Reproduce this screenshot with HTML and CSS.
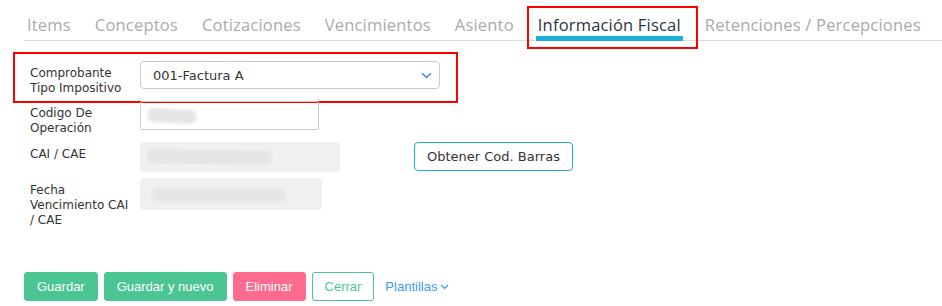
FILE: index.html
```html
<!DOCTYPE html>
<html lang="es">
<head>
  <meta charset="UTF-8">
  <title>Información Fiscal</title>
  <link rel="stylesheet" href="styles.css">
</head>
<body>
  <!-- Tabs -->
  <nav class="tabs">
    <a class="tab">Items</a>
    <a class="tab">Conceptos</a>
    <a class="tab">Cotizaciones</a>
    <a class="tab">Vencimientos</a>
    <a class="tab">Asiento</a>
    <a class="tab active">Información Fiscal</a>
    <a class="tab">Retenciones / Percepciones</a>
  </nav>

  <!-- Fiscal form -->
  <section class="form">
    <div class="row row-marked">
      <label class="lbl">Comprobante Tipo Impositivo</label>
      <div class="select">
        <span>001-Factura A</span>
        <svg class="chev" width="11" height="7" viewBox="0 0 11 7"><path d="M1 1.2 5.5 5.4 10 1.2" fill="none" stroke="#4a8fd8" stroke-width="1.5"/></svg>
      </div>
    </div>
    <div class="row">
      <label class="lbl">Codigo De Operación</label>
      <div class="input"><span class="blur blur-a"></span></div>
    </div>
    <div class="row">
      <label class="lbl">CAI / CAE</label>
      <div class="readonly ro-cai"><span class="blur blur-b"></span></div>
      <button class="btn-outline">Obtener Cod. Barras</button>
    </div>
    <div class="row">
      <label class="lbl">Fecha Vencimiento CAI / CAE</label>
      <div class="readonly ro-fecha"><span class="blur blur-c"></span></div>
    </div>
  </section>

  <!-- Actions -->
  <footer class="actions">
    <button class="btn btn-green">Guardar</button>
    <button class="btn btn-green">Guardar y nuevo</button>
    <button class="btn btn-pink">Eliminar</button>
    <button class="btn btn-ghost">Cerrar</button>
    <a class="link">Plantillas
      <svg width="9" height="6" viewBox="0 0 9 6"><path d="M1 1 4.5 4.5 8 1" fill="none" stroke="#3c9cf0" stroke-width="1.2"/></svg>
    </a>
  </footer>
</body>
</html>
```

FILE: styles.css
```css
/* --- Base --- */
:root {
  --green: #4cc594;
  --pink: #ff6b8e;
  --blue: #1eafd6;
  --link: #3c9cf0;
  --text: #333;
  --muted: #aaa;
  --ro-bg: #eff0f1;
}
* { box-sizing: border-box; margin: 0; padding: 0; }
body { background: #fff; color: var(--text); font-family: "DejaVu Sans", sans-serif; width: 942px; height: 306px; overflow: hidden; }

/* --- Tabs --- */
.tabs {
  display: flex;
  gap: 20px;
  margin-left: 24px;
  padding: 14px 0 0 1px;
  border-bottom: 1px solid #ddd;
  font-family: "Open Sans", sans-serif;
  font-size: 16.5px;
  letter-spacing: 0.19px;
}
.tab {
  position: relative;
  padding: 0 2px;
  line-height: 22px;
  color: var(--muted);
  border-bottom: 5px solid transparent;
  margin-bottom: -1px;
  white-space: nowrap;
}
.tab.active { color: #2c3340; border-bottom-color: var(--blue); }
.tab.active::after {
  content: "";
  position: absolute;
  left: -9px; right: -15px; top: -8px; bottom: -13px;
  border: 2px solid #f00;
}

/* --- Form --- */
.form { display: flex; flex-direction: column; gap: 6px; padding: 20px 0 0 30px; }
.row { position: relative; display: flex; align-items: flex-start; }
.row-marked { margin-bottom: -1px; }
.row-marked::after {
  content: "";
  position: absolute;
  left: -17px; top: -9px;
  width: 441px; height: 47px;
  border: 2px solid #f00;
}
.lbl { width: 110px; padding: 5px 8px 0 0; font-size: 12px; line-height: 15px; color: var(--text); }

.select {
  width: 300px; height: 28px;
  display: flex; align-items: center; justify-content: space-between;
  padding: 0 7px 0 12px;
  border: 1px solid #ccc; border-radius: 4px;
  font-size: 13px;
}
.input { width: 179px; height: 29px; border: 1px solid #ccc; border-radius: 2px; padding: 7px 0 0 6px; }
.readonly { height: 30px; background: var(--ro-bg); border-radius: 4px; padding: 8px 0 0 6px; }
.ro-cai { width: 200px; }
.ro-fecha { width: 182px; height: 32px; padding: 10px 0 0 12px; }

/* blurred values */
.blur { display: block; height: 14px; border-radius: 7px; background: #e6e6e4; filter: blur(1.5px); }
.blur-a { width: 50px; transform: rotate(3deg); }
.blur-b { width: 126px; background: #e4e5e6; transform: rotate(1deg); }
.blur-c { width: 134px; background: #e5e6e7; }

.btn-outline {
  margin-left: 74px;
  height: 29px;
  padding: 0 12px;
  background: #fff;
  border: 1px solid var(--blue);
  border-radius: 4px;
  font-family: "DejaVu Sans", sans-serif;
  font-size: 13px;
  color: var(--text);
}

/* --- Actions --- */
.actions { display: flex; align-items: center; gap: 6px; margin: 44px 0 0 24px; }
.btn {
  height: 29px;
  padding: 0 12px;
  border: 1px solid transparent;
  border-radius: 3px;
  font-family: "Liberation Sans", Arial, sans-serif;
  font-size: 13px;
  color: #fff;
}
.btn-green { background: var(--green); border-color: var(--green); }
.btn-pink { background: var(--pink); border-color: var(--pink); }
.btn-ghost { background: #fff; border-color: var(--green); color: var(--green); }
.link {
  margin-left: 5px;
  font-family: "Liberation Sans", Arial, sans-serif;
  font-size: 13px;
  color: var(--link);
  display: flex; align-items: center; gap: 3px;
}
```
